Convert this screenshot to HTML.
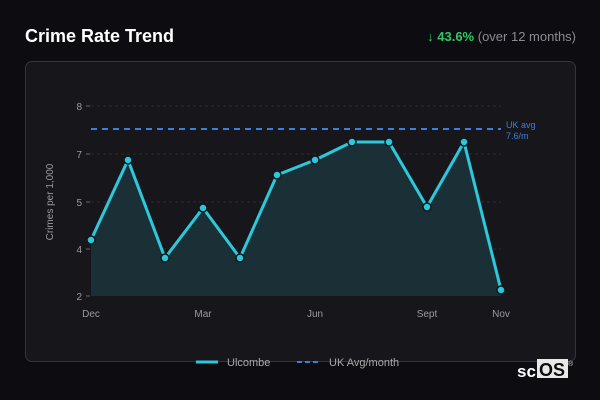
<!DOCTYPE html>
<html><head><style>
body{margin:0;width:600px;height:400px;background:#0d0d11;font-family:"Liberation Sans",sans-serif;overflow:hidden;position:relative}
.t{position:absolute;left:25px;top:26px;color:#fff;font-weight:bold;font-size:18px}
.s{position:absolute;right:24px;top:29px;font-size:13px;color:#8a8a90}
.s b{color:#2ec866}
.card{position:absolute;left:25px;top:61px;width:549px;height:299px;border:1px solid #34343a;border-radius:7px;background:#16161b}
svg{position:absolute;left:0;top:0}
</style></head><body>
<div class="t">Crime Rate Trend</div>
<div class="s"><b>↓ 43.6%</b> (over 12 months)</div>
<div class="card"></div>
<svg width="600" height="400" font-family="Liberation Sans, sans-serif">
<g stroke="#2a2a30" stroke-dasharray="3,3" stroke-width="1">
<line x1="91" x2="501" y1="106" y2="106"/><line x1="91" x2="501" y1="154" y2="154"/><line x1="91" x2="501" y1="202" y2="202"/><line x1="91" x2="501" y1="249" y2="249"/></g>
<g stroke="#666" stroke-width="1"><line x1="86" x2="90" y1="106" y2="106"/><line x1="86" x2="90" y1="154" y2="154"/><line x1="86" x2="90" y1="202" y2="202"/><line x1="86" x2="90" y1="249" y2="249"/><line x1="86" x2="90" y1="296" y2="296"/></g>
<g fill="#9a9aa0" font-size="10" text-anchor="end"><text x="82" y="110">8</text><text x="82" y="158">7</text><text x="82" y="206">5</text><text x="82" y="253">4</text><text x="82" y="300">2</text></g>
<text transform="translate(53,202) rotate(-90)" fill="#9a9aa0" font-size="10" text-anchor="middle">Crimes per 1,000</text>
<g fill="#9a9aa0" font-size="10" text-anchor="middle"><text x="91" y="317">Dec</text><text x="203" y="317">Mar</text><text x="315" y="317">Jun</text><text x="427" y="317">Sept</text><text x="501" y="317">Nov</text></g>
<path d="M91,240 L128,160 165,258 203,208 240,258 277,175 315,160 352,142 389,142 427,207 464,142 501,290 L501,296 L91,296Z" fill="#1a3036"/>
<line x1="91" x2="501" y1="129" y2="129" stroke="#3d7fe0" stroke-width="2" stroke-dasharray="6,5"/>
<text x="506" y="128" fill="#3d7fe0" font-size="9">UK avg</text><text x="506" y="139" fill="#3d7fe0" font-size="9">7.6/m</text>
<polyline points="91,240 128,160 165,258 203,208 240,258 277,175 315,160 352,142 389,142 427,207 464,142 501,290" fill="none" stroke="#2ec8dc" stroke-width="3" stroke-linejoin="round"/>
<g fill="#2ec8dc" stroke="#0d1a1e" stroke-width="1.5"><circle cx="91" cy="240" r="4"/><circle cx="128" cy="160" r="4"/><circle cx="165" cy="258" r="4"/><circle cx="203" cy="208" r="4"/><circle cx="240" cy="258" r="4"/><circle cx="277" cy="175" r="4"/><circle cx="315" cy="160" r="4"/><circle cx="352" cy="142" r="4"/><circle cx="389" cy="142" r="4"/><circle cx="427" cy="207" r="4"/><circle cx="464" cy="142" r="4"/><circle cx="501" cy="290" r="4"/></g>
<line x1="196" x2="218" y1="362" y2="362" stroke="#2ec8dc" stroke-width="3"/>
<text x="227" y="366" fill="#aaa" font-size="11">Ulcombe</text>
<line x1="297" x2="321" y1="362" y2="362" stroke="#3d7fe0" stroke-width="2" stroke-dasharray="5,3"/>
<text x="329" y="366" fill="#aaa" font-size="11">UK Avg/month</text>
<text x="517" y="377" fill="#fff" font-size="17" font-weight="bold">sc</text>
<rect x="537" y="359" width="31" height="19" fill="#e8e8e8"/>
<text x="539" y="376" fill="#0d0d11" font-size="18" font-weight="bold">OS</text>
<text x="568" y="366" fill="#ccc" font-size="7">®</text>
</svg>
</body></html>
